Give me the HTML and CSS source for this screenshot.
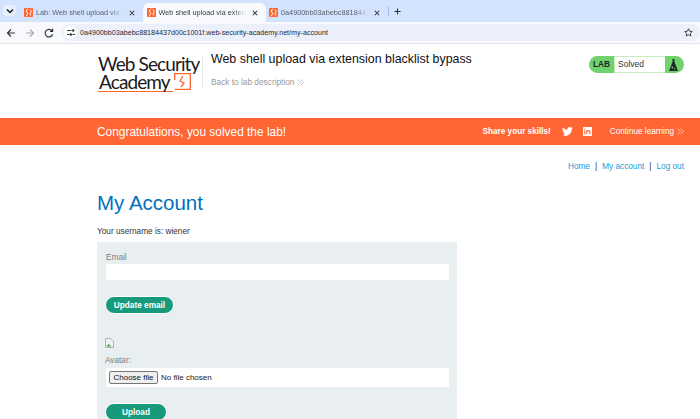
FILE: index.html
```html
<!DOCTYPE html>
<html>
<head>
    <title>My Account</title>
    <link rel="stylesheet" href="styles.css">
</head>
<body>
    <div class="tabstrip">
        <div class="tab-menu">
            <svg width="8" height="6" viewBox="0 0 8 6"><path d="M1 1.5l3 3 3-3" fill="none" stroke="#1f1f1f" stroke-width="1.5"/></svg>
        </div>
        <div class="tab">
            <svg class="favicon" viewBox="0 0 12 12"><rect width="12" height="12" rx="1" fill="#ff6633"/><path d="M5 1L3 4l2 3-2 4M8 2l2 3-2 2 1 3" fill="none" stroke="#fff" stroke-width="1.3"/></svg>
            <span class="tab-title">Lab: Web shell upload via extension</span>
            <svg class="tab-close" viewBox="0 0 8 8"><path d="M1 1l6 6M7 1L1 7" stroke="#333" stroke-width="1.4"/></svg>
        </div>
        <div class="tab active">
            <svg class="favicon" viewBox="0 0 12 12"><rect width="12" height="12" rx="1" fill="#ff6633"/><path d="M5 1L3 4l2 3-2 4M8 2l2 3-2 2 1 3" fill="none" stroke="#fff" stroke-width="1.3"/></svg>
            <span class="tab-title">Web shell upload via extension blacklist</span>
            <svg class="tab-close" viewBox="0 0 8 8"><path d="M1 1l6 6M7 1L1 7" stroke="#333" stroke-width="1.4"/></svg>
        </div>
        <div class="tab">
            <svg class="favicon" viewBox="0 0 12 12"><rect width="12" height="12" rx="1" fill="#ff6633"/><path d="M5 1L3 4l2 3-2 4M8 2l2 3-2 2 1 3" fill="none" stroke="#fff" stroke-width="1.3"/></svg>
            <span class="tab-title">0a4900bb03abebc88184437d00c1001f</span>
            <svg class="tab-close" viewBox="0 0 8 8"><path d="M1 1l6 6M7 1L1 7" stroke="#333" stroke-width="1.4"/></svg>
        </div>
        <div class="tab-sep"></div>
        <svg class="tab-new" viewBox="0 0 8 8"><path d="M4 .5v7M.5 4h7" stroke="#333" stroke-width="1.2"/></svg>
    </div>

    <div class="toolbar">
        <svg class="nav-icon" viewBox="0 0 10 10"><path d="M9 5H1.5M5 1.5L1.5 5 5 8.5" fill="none" stroke="#333" stroke-width="1.2"/></svg>
        <svg class="nav-icon" viewBox="0 0 10 10"><path d="M1 5h7.5M5 1.5L8.5 5 5 8.5" fill="none" stroke="#aaa" stroke-width="1.2"/></svg>
        <svg class="nav-icon" viewBox="0 0 10 10"><path d="M8.6 6.2A3.8 3.8 0 1 1 8 2.8M8.6 .8v2.6H6" fill="none" stroke="#333" stroke-width="1.2"/></svg>
        <div class="omnibox">
            <div class="site-info">
                <svg width="8" height="7" viewBox="0 0 8 7"><path d="M0 1.5h4.5M0 5.5h2.5M5.5 5.5H8" stroke="#333" stroke-width="1"/><circle cx="6.2" cy="1.5" r="1.2" fill="#333"/><circle cx="3.8" cy="5.5" r="1.2" fill="#333"/></svg>
            </div>
            <span class="url">0a4900bb03abebc88184437d00c1001f.web-security-academy.net/my-account</span>
            <svg class="star" viewBox="0 0 10 10"><path d="M5 .9l1.25 2.7 2.95.35-2.2 2 .6 2.95L5 7.4 2.4 8.9l.6-2.95-2.2-2 2.95-.35z" fill="none" stroke="#333" stroke-width="1"/></svg>
        </div>
    </div>

    <header class="lab-header">
        <div class="logo">
            <div class="logo-top">Web Security</div>
            <div class="logo-bottom">
                <span>Academy</span>
                <svg class="logo-mark" width="17" height="17" viewBox="0 0 17 17"><path d="M.7 7V.7h15.6v15.6H.7" fill="none" stroke="#ff6633" stroke-width="1.3"/><path d="M9 3L6 8l4 2-3 4" fill="none" stroke="#ff6633" stroke-width="1.3"/></svg>
            </div>
            <div class="logo-line"></div>
        </div>
        <div class="logo-sep"></div>
        <div class="lab-title">
            <h2>Web shell upload via extension blacklist bypass</h2>
            <a class="back-link">Back to lab description
                <svg class="chevrons" width="7" height="7" viewBox="0 0 7 7"><path d="M.5.5l3 3-3 3M3.5.5l3 3-3 3" fill="none" stroke="#bbb" stroke-width=".8"/></svg>
            </a>
        </div>
        <div class="lab-status">
            <span class="status-label">LAB</span>
            <span class="status-value">Solved</span>
            <span class="status-icon">
                <svg width="9" height="12" viewBox="0 0 9 12"><path d="M3.5 0h2v3L9 12H0l3.5-9z" fill="#1c2b2a"/><circle cx="3.5" cy="8.5" r=".9" fill="#7ed07a"/><circle cx="5.8" cy="10" r=".7" fill="#7ed07a"/></svg>
            </span>
        </div>
    </header>

    <section class="banner">
        <span class="banner-text">Congratulations, you solved the lab!</span>
        <div class="banner-right">
            <strong>Share your skills!</strong>
            <svg class="social" width="11" height="9" viewBox="0 0 24 20"><path d="M24 2.4a10 10 0 0 1-2.8.8 5 5 0 0 0 2.2-2.7 10 10 0 0 1-3.1 1.2 4.9 4.9 0 0 0-8.4 4.5A14 14 0 0 1 1.7.9a4.9 4.9 0 0 0 1.5 6.6A5 5 0 0 1 1 6.9a4.9 4.9 0 0 0 3.9 4.8 5 5 0 0 1-2.2.1 4.9 4.9 0 0 0 4.6 3.4A9.9 9.9 0 0 1 0 17.3 14 14 0 0 0 7.5 19.5c9.1 0 14.3-7.7 14-14.6A10 10 0 0 0 24 2.4z" fill="#fff"/></svg>
            <svg class="social social-in" width="9" height="9" viewBox="0 0 10 10"><rect width="10" height="10" rx="1" fill="#fff"/><path d="M2 4v4M2 2v1M4.2 8V4M4.2 5.8c0-2.2 3.6-2.5 3.6 0V8" fill="none" stroke="#ff6633" stroke-width="1.2"/></svg>
            <a class="continue">Continue learning</a>
            <svg class="chevrons" width="7" height="7" viewBox="0 0 7 7"><path d="M.5.5l3 3-3 3M3.5.5l3 3-3 3" fill="none" stroke="#ffd5c5" stroke-width=".8"/></svg>
        </div>
    </section>

    <nav class="top-links">
        <a>Home</a><span>|</span><a>My account</a><span>|</span><a>Log out</a>
    </nav>

    <main class="content">
        <h1>My Account</h1>
        <p class="username">Your username is: wiener</p>
        <div class="account-form">
            <label class="field-label">Email</label>
            <div class="text-input"></div>
            <button class="btn btn-email">Update email</button>
            <svg class="broken-img" width="9" height="10" viewBox="0 0 9 10"><path d="M.5.5h5l3 3v6h-8z" fill="#eef1f5" stroke="#9aa5b1" stroke-width=".8"/><path d="M1.5 8.5l2-2.5 3 2.5z" fill="#4f9d45"/></svg>
            <label class="field-label avatar-label">Avatar:</label>
            <div class="file-row">
                <button class="file-btn">Choose file</button>
                <span class="file-name">No file chosen</span>
            </div>
            <button class="btn btn-upload">Upload</button>
        </div>
    </main>
</body>
</html>
```

FILE: styles.css
```css
html, body {
    margin: 0;
    height: 419px;
    overflow: hidden;
    background-color: #fff;
    font-family: "Liberation Sans", Arial, sans-serif;
}

/* Browser chrome */
.tabstrip {
    display: flex;
    align-items: flex-end;
    height: 22px;
    padding-left: 3px;
    box-sizing: border-box;
    background-color: #d3e3fd;
}
.tab-menu {
    display: flex;
    align-items: center;
    justify-content: center;
    flex-shrink: 0;
    width: 13px;
    height: 11px;
    margin: 0 4.5px 6px 0;
    border-radius: 4px;
    background-color: #e8effc;
}
.tab {
    display: flex;
    align-items: center;
    flex-shrink: 0;
    width: 122.5px;
    height: 19px;
    padding: 0 8px 0 3.5px;
    box-sizing: border-box;
    font-size: 7.3px;
    color: #5a6270;
}
.tab.active {
    background-color: #f7f9fd;
    border-radius: 6px 6px 0 0;
    color: #3c4043;
}
.favicon {
    flex-shrink: 0;
    width: 9px;
    height: 9px;
    margin-right: 3px;
}
.tab-title {
    flex-grow: 1;
    overflow: hidden;
    white-space: nowrap;
    -webkit-mask-image: linear-gradient(to right, #000 85%, transparent);
    mask-image: linear-gradient(to right, #000 85%, transparent);
}
.tab-close {
    flex-shrink: 0;
    width: 6px;
    height: 6px;
    margin-left: 6px;
}
.tab-sep {
    flex-shrink: 0;
    width: 1px;
    height: 10px;
    margin: 0 5px 6px 0;
    background-color: #a9c0e4;
}
.tab-new {
    flex-shrink: 0;
    width: 7px;
    height: 7px;
    margin-bottom: 7px;
}
.toolbar {
    display: flex;
    align-items: center;
    height: 21px;
    padding-left: 6px;
    background-color: #f7f9fd;
    border-bottom: 1px solid #e2e4e8;
}
.nav-icon {
    width: 10px;
    height: 10px;
    margin-right: 9px;
}
.omnibox {
    display: flex;
    align-items: center;
    flex-grow: 1;
    height: 17px;
    margin-left: -1px;
    border-radius: 9px;
    background-color: #ebf0fa;
    font-size: 7.15px;
    color: #1f2937;
}
.site-info {
    display: flex;
    align-items: center;
    justify-content: center;
    width: 13px;
    height: 13px;
    margin: 0 3px 0 2px;
    border-radius: 50%;
    background-color: #fff;
}
.url {
    flex-grow: 1;
}
.star {
    width: 9px;
    height: 9px;
    margin-right: 7px;
}

/* Lab header */
.lab-header {
    display: flex;
    height: 74px;
    padding: 0 16px 0 98px;
    box-sizing: border-box;
}
.logo {
    width: 104px;
    flex-shrink: 0;
    padding-top: 11px;
    font-family: "Lato", sans-serif;
    font-size: 19px;
    line-height: 18px;
    letter-spacing: -0.9px;
    white-space: nowrap;
    color: #1a1a1a;
}
.logo-bottom {
    display: flex;
    justify-content: space-between;
    margin-left: 1px;
}
.logo-mark {
    margin: 0 11px 0 0;
}
.logo-line {
    width: 75px;
    height: 1px;
    background-color: #ff6633;
}
.logo-sep {
    flex-shrink: 0;
    width: 1px;
    height: 32px;
    margin: 12px 8px 0 0;
    background-color: #e6e6e6;
}
.lab-title {
    padding-top: 7px;
}
.lab-title h2 {
    margin: 0 0 10px;
    font-size: 12.4px;
    font-weight: normal;
    line-height: 16px;
    white-space: nowrap;
    color: #111;
}
.back-link {
    display: flex;
    align-items: center;
    gap: 3px;
    font-size: 8.3px;
    line-height: 11px;
    color: #999;
}
.lab-status {
    display: flex;
    align-items: stretch;
    height: 17px;
    margin: 12px 0 0 auto;
    border-radius: 9px;
    background-color: #70d16d;
    overflow: hidden;
}
.status-label {
    width: 25px;
    line-height: 17px;
    text-align: center;
    font-size: 8.3px;
    font-weight: bold;
    color: #1c2b2a;
}
.status-value {
    width: 47px;
    padding-left: 3px;
    line-height: 15px;
    border: 1px solid #c4ebc2;
    border-right: none;
    background-color: #fff;
    font-size: 8.5px;
    color: #333;
}
.status-icon {
    display: flex;
    align-items: center;
    justify-content: center;
    width: 19px;
    padding-right: 3px;
    box-sizing: border-box;
}

/* Orange banner */
.banner {
    display: flex;
    align-items: center;
    justify-content: space-between;
    height: 27px;
    padding: 0 16px 0 97px;
    background-color: #ff6633;
    color: #fff;
}
.banner-text {
    font-size: 11.9px;
}
.banner-right {
    display: flex;
    align-items: center;
    font-size: 8.2px;
}
.social {
    margin-left: 11px;
}
.social-in {
    margin-left: 10px;
}
.continue {
    margin: 0 3px 0 18px;
}

/* Page content */
.top-links {
    display: flex;
    justify-content: flex-end;
    gap: 5px;
    padding: 16px 16px 0 0;
    font-size: 8.25px;
    line-height: 11px;
    color: #333;
}
.top-links a {
    color: #1a9cd8;
}
.content {
    padding-left: 97px;
}
.content h1 {
    margin: 18px 0 0;
    font-size: 20.5px;
    font-weight: normal;
    line-height: 26px;
    color: #0071bc;
}
.username {
    margin: 10px 0 0;
    font-size: 8.25px;
    line-height: 11px;
    color: #333;
}
.account-form {
    display: flex;
    flex-direction: column;
    align-items: flex-start;
    width: 360px;
    height: 177px;
    margin-top: 5px;
    padding: 10px 8px 0 9px;
    box-sizing: border-box;
    overflow: hidden;
    background-color: #e9eef0;
}
.field-label {
    font-size: 8.25px;
    line-height: 11px;
    color: #808080;
}
.text-input {
    flex-shrink: 0;
    width: 100%;
    height: 16px;
    margin-top: 1px;
    background-color: #fff;
}
.btn {
    flex-shrink: 0;
    height: 18px;
    margin-left: -1px;
    padding: 0;
    border: 1px solid #fff;
    border-radius: 9px;
    background-color: #169a7b;
    box-sizing: border-box;
    font-family: inherit;
    font-size: 8.25px;
    font-weight: bold;
    color: #fff;
}
.btn-email {
    width: 69px;
    margin-top: 16px;
}
.broken-img {
    flex-shrink: 0;
    margin: 24px 0 0 -1px;
}
.avatar-label {
    margin: 7px 0 0 -1px;
}
.file-row {
    display: flex;
    flex-shrink: 0;
    align-items: center;
    width: 100%;
    height: 19px;
    margin-top: 2px;
    background-color: #fff;
    font-size: 8px;
    color: #222;
}
.file-btn {
    width: 49px;
    height: 13px;
    margin: 0 3px 0 3px;
    padding: 0;
    border: 1px solid #767676;
    border-radius: 2px;
    background-color: #efefef;
    font-family: inherit;
    font-size: 8px;
    color: #111;
}
.btn-upload {
    width: 62px;
    margin-top: 16px;
}
```
